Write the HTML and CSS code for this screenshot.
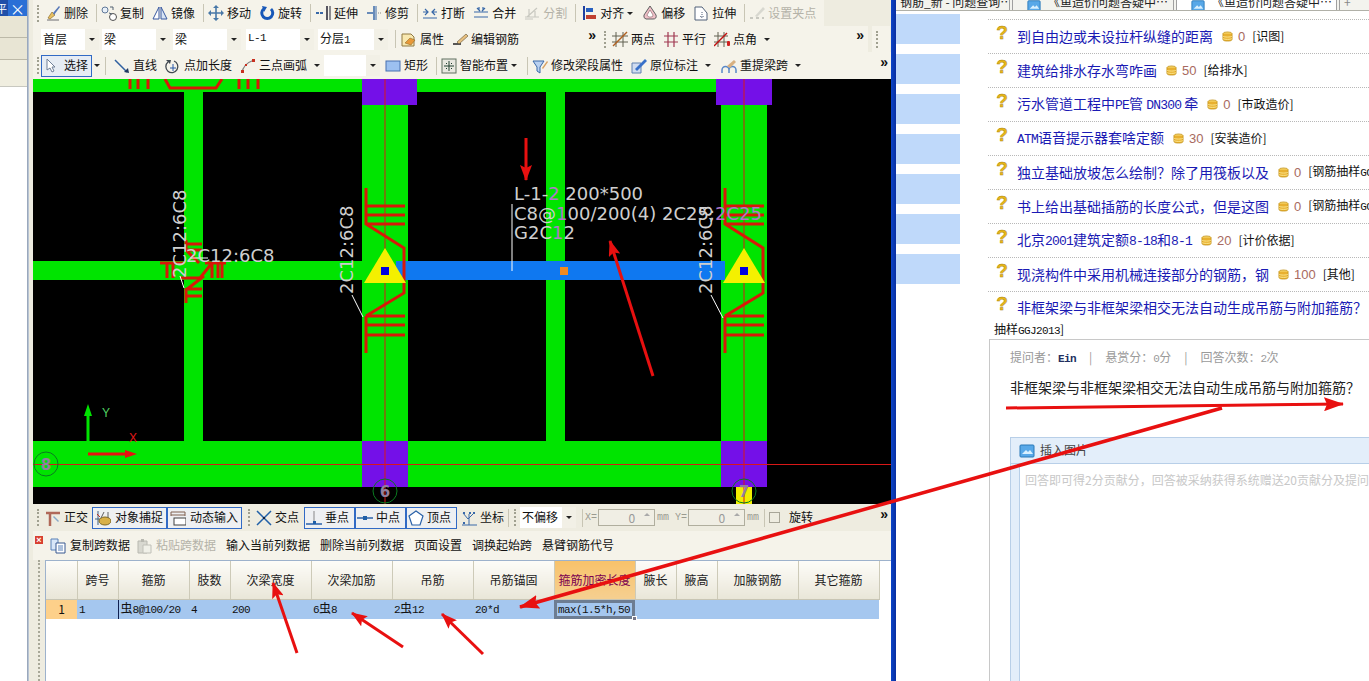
FILE: index.html
```html
<!DOCTYPE html>
<html lang="zh-CN">
<head>
<meta charset="utf-8">
<title>钢筋抽样</title>
<link rel="stylesheet" href="styles.css">
</head>
<body>
<svg class="defs" width="0" height="0">
  <defs>
    <symbol id="i-del" viewBox="0 0 16 16"><path d="M2 15h12" stroke="#999" stroke-width="1.5"/><path d="M3 13l4-6 3 3-5 4z" fill="#e8c060" stroke="#806020" stroke-width=".6"/><path d="M8 8l6-7 1 1-6 8z" fill="#5878b8"/></symbol>
    <symbol id="i-copy" viewBox="0 0 16 16"><circle cx="4" cy="5" r="3" fill="#e8f0f8" stroke="#607898"/><circle cx="12" cy="12" r="3.5" fill="#fff" stroke="#505050"/><path d="M9 2l3 0M12 2v3M8 8l3 1" stroke="#506070" fill="none"/></symbol>
    <symbol id="i-mirror" viewBox="0 0 16 16"><path d="M7 2v12H1z" fill="#fff" stroke="#3858a0"/><path d="M9 2v12h6z" fill="#d8e4f4" stroke="#3858a0"/></symbol>
    <symbol id="i-move" viewBox="0 0 16 16"><path d="M8 1v14M1 8h14" stroke="#4878a8" stroke-width="1.6"/><path d="M8 0l3 3H5zM8 16l3-3H5zM0 8l3-3v6zM16 8l-3-3v6z" fill="#4878a8"/></symbol>
    <symbol id="i-rot" viewBox="0 0 16 16"><path d="M12 4a5.5 5.5 0 1 1-7.500 0" fill="none" stroke="#1858b8" stroke-width="3"/><path d="M3 1l5 1-3 5z" fill="#1858b8"/></symbol>
    <symbol id="i-ext" viewBox="0 0 16 16"><path d="M1 8h8" stroke="#3868a8" stroke-width="2" stroke-dasharray="3 1"/><path d="M12 1v14" stroke="#223" stroke-width="1.500"/><path d="M15 1v14" stroke="#223"/></symbol>
    <symbol id="i-trim" viewBox="0 0 16 16"><path d="M8 1v14" stroke="#3868a8" stroke-width="1.500"/><path d="M10 1v14" stroke="#3868a8"/><path d="M1 8h6" stroke="#3868a8" stroke-width="1.500"/><path d="M12 8h4" stroke="#888" stroke-dasharray="1 1"/></symbol>
    <symbol id="i-break" viewBox="0 0 16 16"><path d="M1 7h5M10 7h5M1 13h14M3 4l3 3-3 3M13 4l-3 3 3 3" stroke="#3868a8" fill="none" stroke-width="1.200"/></symbol>
    <symbol id="i-merge" viewBox="0 0 16 16"><path d="M1 7h14M1 12h14M4 3l3 3M12 3l-3 3M6 2v3M10 2v3" stroke="#3868a8" fill="none" stroke-width="1.200"/></symbol>
    <symbol id="i-split" viewBox="0 0 16 16"><path d="M1 12h14M1 14h8M3 12l10-9M5 4v8M11 6v6" stroke="#c8c8c0" fill="none" stroke-width="1.200"/></symbol>
    <symbol id="i-align" viewBox="0 0 16 16"><path d="M2 1v14" stroke="#2040a0" stroke-width="2"/><rect x="4" y="3" width="7" height="4" fill="#2860c0"/><rect x="4" y="10" width="10" height="4" fill="#c04030"/></symbol>
    <symbol id="i-offset" viewBox="0 0 16 16"><path d="M8 1l6 9q1 4-3 4H4q-3-1-2-4z" fill="#f0c0c8" stroke="#606060"/><path d="M8 5l3 5q0 2-2 2H7q-2-1-2-2z" fill="#fff" stroke="#806060" stroke-width=".6"/></symbol>
    <symbol id="i-stretch" viewBox="0 0 16 16"><path d="M2 2h7l5 6v7H2z" fill="#fff" stroke="#506078"/><path d="M9 7v6M7 11l2 2 2-2" stroke="#506078" fill="none" stroke-dasharray="1 1"/></symbol>
    <symbol id="i-grip" viewBox="0 0 16 16"><path d="M1 13h3M7 13h3M13 13h2" stroke="#c8c8c0" stroke-width="2"/><path d="M6 11l8-9 2 2-8 8z" fill="#d8d8d0"/></symbol>
    <symbol id="i-prop" viewBox="0 0 16 16"><path d="M1 3h9l3 3v9H1z" fill="#f8e8b0" stroke="#907840"/><path d="M4 12l5-5 5 2-4 5z" fill="#e89838" stroke="#806020" stroke-width=".5"/></symbol>
    <symbol id="i-edit" viewBox="0 0 16 16"><path d="M1 13h8" stroke="#222" stroke-width="1.500"/><path d="M5 11l9-8 2 2-9 8z" fill="#e8c080" stroke="#605030" stroke-width=".6"/></symbol>
    <symbol id="i-two" viewBox="0 0 16 16"><path d="M4 1v15M11 1v15M0 5h16M0 11h16" stroke="#606050" stroke-width="1"/><path d="M1 15L15 1" stroke="#b06020" stroke-width="1.500"/></symbol>
    <symbol id="i-par" viewBox="0 0 16 16"><path d="M5 1v15M11 1v15M1 5h14M1 11h14" stroke="#a03850" stroke-width="1.200"/></symbol>
    <symbol id="i-ang" viewBox="0 0 16 16"><path d="M4 1v15M10 1v15M0 5h14M0 11h14" stroke="#606050"/><path d="M0 15L13 2" stroke="#c01010" stroke-width="1.500"/><rect x="13" y="10" width="3" height="5" rx="1" fill="#d02020"/></symbol>
    <symbol id="i-cur" viewBox="0 0 16 16"><path d="M3 1v11l3-2 2 4 2-1-2-4h3z" fill="#fff" stroke="#708098"/></symbol>
    <symbol id="i-line" viewBox="0 0 16 16"><path d="M1 2l12 12" stroke="#3060a0" stroke-width="1.500"/><path d="M15 15l-5-1 4-4z" fill="#203860"/></symbol>
    <symbol id="i-pt" viewBox="0 0 16 16"><path d="M3 4a6 6 0 1 0 6-1" fill="none" stroke="#404850" stroke-width="1.300"/><path d="M8 6v7M5 10h6" stroke="#2858a8"/><path d="M1 2l5 0-1 4z" fill="#404850"/></symbol>
    <symbol id="i-arc" viewBox="0 0 16 16"><path d="M2 15Q3 6 14 2" fill="none" stroke="#808080" stroke-width="1.300"/><rect x="1" y="12" width="3" height="3" fill="#c83020"/><rect x="12" y="1" width="3" height="3" fill="#c83020"/><rect x="5" y="6" width="2" height="2" fill="#c83020"/></symbol>
    <symbol id="i-rect" viewBox="0 0 16 16"><rect x="1" y="3" width="14" height="10" fill="#9cc0f0" stroke="#4870b0"/></symbol>
    <symbol id="i-smart" viewBox="0 0 16 16"><rect x="1" y="1" width="14" height="14" fill="#e8e8e0" stroke="#607060"/><path d="M8 3v10M3 8h10M5 5l1 1M11 5l-1 1M5 11l1-1M11 11l-1-1" stroke="#204030"/></symbol>
    <symbol id="i-fun" viewBox="0 0 16 16"><path d="M1 3h11l-4 6v6l-3-2V9z" fill="#b8d0f0" stroke="#3868a8"/><path d="M10 10l5-7 1 1-5 7z" fill="#d8a060"/></symbol>
    <symbol id="i-mark" viewBox="0 0 16 16"><path d="M1 5h9v10H1z" fill="#d0dcf0" stroke="#6080b0"/><path d="M4 11L14 1l2 2L6 13z" fill="#3870c8"/></symbol>
    <symbol id="i-span" viewBox="0 0 16 16"><path d="M1 15v-3a3 3 0 0 1 7 0v3M8 15v-3a3 3 0 0 1 7 0v3" fill="none" stroke="#5888c8" stroke-width="1.500"/><path d="M6 8l7-6 2 2-6 6z" fill="#d8b080"/></symbol>
    <symbol id="i-orth" viewBox="0 0 16 16"><path d="M1 3h14M5 3v13" stroke="#b06858" stroke-width="2.500"/><path d="M9 6l5 5-1 1-5-5z" fill="#88a8c8"/></symbol>
    <symbol id="i-snap" viewBox="0 0 16 16"><path d="M3 1v14M0 9h7" stroke="#406080"/><path d="M2 4l3 3" stroke="#c03020"/><ellipse cx="10" cy="11" rx="6" ry="4" fill="#d8b048" stroke="#806820"/><path d="M6 8l3-6M13 8l0-6" stroke="#606060"/></symbol>
    <symbol id="i-dyn" viewBox="0 0 16 16"><path d="M1 2h14M1 5h14M1 2v4M15 2v4" stroke="#806050"/><rect x="4" y="8" width="12" height="7" fill="#fff" stroke="#404040"/></symbol>
    <symbol id="i-cross" viewBox="0 0 16 16"><path d="M1 1l14 14M15 1L1 15" stroke="#2060a8" stroke-width="1.500"/><rect x="7" y="7" width="2" height="2" fill="#102040"/></symbol>
    <symbol id="i-perp" viewBox="0 0 16 16"><path d="M0 14h16" stroke="#2860a8" stroke-width="1.500"/><path d="M8 1v11" stroke="#888"/><rect x="7" y="11" width="3" height="3" fill="#2060a8"/></symbol>
    <symbol id="i-mid" viewBox="0 0 16 16"><path d="M0 8h16" stroke="#2860a8" stroke-width="1.500"/><rect x="6" y="6" width="4" height="4" fill="#2060a8"/></symbol>
    <symbol id="i-ver" viewBox="0 0 16 16"><path d="M8 1l7 5-3 9H4L1 6z" fill="#fff" stroke="#2860a8" stroke-width="1.200"/></symbol>
    <symbol id="i-coord" viewBox="0 0 16 16"><path d="M1 15h15M8 15V4M2 3l5 6 6-6" stroke="#3868a8" fill="none"/><path d="M2 2h2v2H2zM12 2h2v2h-2zM2 12h2v2H2zM8 2h2v2H8z" fill="#3868a8"/></symbol>
    <symbol id="i-cp" viewBox="0 0 16 16"><path d="M1 1h7v11H1z" fill="#d8e6f8" stroke="#5880b8"/><path d="M6 5h9v10H6z" fill="#fff" stroke="#385890"/><path d="M8 8h5M8 10h5M8 12h5" stroke="#5880b8"/></symbol>
    <symbol id="i-paste" viewBox="0 0 16 16"><path d="M2 3h9v12H2z" fill="#d8d8d0" stroke="#b8b8b0"/><path d="M5 1h3v3H5z" fill="#b8b8b0"/><path d="M7 7h8v8H7z" fill="#f0f0e8" stroke="#c0c0b8"/></symbol>
    <symbol id="i-pic" viewBox="0 0 16 16"><rect x="1" y="2" width="14" height="12" rx="1" fill="#58a8e8" stroke="#2878b8"/><path d="M3 11l4-4 2 2 2-2 3 4z" fill="#d8f0ff"/></symbol>
    <symbol id="i-coin" viewBox="0 0 12 12"><ellipse cx="6" cy="3" rx="5" ry="2" fill="#f4d060" stroke="#c09018" stroke-width=".8"/><path d="M1 3v6c0 1.500 2 2 5 2s5-.5 5-2V3" fill="#e8b030" stroke="#c09018" stroke-width=".8"/><path d="M1 5.500c1 1.500 9 1.500 10 0M1 8c1 1.500 9 1.500 10 0" fill="none" stroke="#fff0a0" stroke-width=".9"/></symbol>
    <marker id="head" viewBox="0 0 16 12" refX="15" refY="6" markerWidth="16" markerHeight="12" markerUnits="userSpaceOnUse" orient="auto"><path d="M0 0L16 6 0 12 3 6z" fill="#e81010"/></marker>
    <marker id="head-big" viewBox="0 0 20 14" refX="19" refY="7" markerWidth="20" markerHeight="14" markerUnits="userSpaceOnUse" orient="auto"><path d="M0 0L20 7 0 14 3 7z" fill="#e81010"/></marker>
  </defs>
</svg>

<aside class="dock">
  <div class="dock-title"><span class="dock-pin">平</span><span class="dock-x">×</span></div>
  <div class="dock-tab"></div>
  <div class="dock-tab"></div>
  <div class="dock-tab dock-tab-light"></div>
  <div class="dock-body"></div>
</aside>

<main class="app">
  <div class="tb tb1">
    <div class="seg seg-824">
      <span class="grip"></span>
      <span class="tool"><svg class="ic"><use href="#i-del"/></svg>删除</span><span class="sep"></span>
      <span class="tool"><svg class="ic"><use href="#i-copy"/></svg>复制</span>
      <span class="tool"><svg class="ic"><use href="#i-mirror"/></svg>镜像</span><span class="sep"></span>
      <span class="tool"><svg class="ic"><use href="#i-move"/></svg>移动</span>
      <span class="tool"><svg class="ic"><use href="#i-rot"/></svg>旋转</span><span class="sep"></span>
      <span class="tool"><svg class="ic"><use href="#i-ext"/></svg>延伸</span>
      <span class="tool"><svg class="ic"><use href="#i-trim"/></svg>修剪</span><span class="sep"></span>
      <span class="tool"><svg class="ic"><use href="#i-break"/></svg>打断</span>
      <span class="tool"><svg class="ic"><use href="#i-merge"/></svg>合并</span>
      <span class="tool off"><svg class="ic"><use href="#i-split"/></svg>分割</span><span class="sep"></span>
      <span class="tool tool-align"><svg class="ic"><use href="#i-align"/></svg>对齐<i class="caret caret-near"></i></span>
      <span class="tool"><svg class="ic"><use href="#i-offset"/></svg>偏移</span>
      <span class="tool"><svg class="ic"><use href="#i-stretch"/></svg>拉伸</span><span class="sep"></span>
      <span class="tool off"><svg class="ic"><use href="#i-grip"/></svg>设置夹点</span>
    </div>
  </div>

  <div class="tb tb2">
    <div class="seg seg-600">
      <span class="combo w58">首层<i class="caret"></i></span>
      <span class="combo w68">梁<i class="caret"></i></span>
      <span class="combo w68">梁<i class="caret"></i></span>
      <span class="combo w68 gap5"><b class="m12">L-1</b><i class="caret"></i></span>
      <span class="combo w70"><span>分层<b class="m12">1</b></span><i class="caret"></i></span>
      <span class="sep sep-tight"></span>
      <span class="tool"><svg class="ic"><use href="#i-prop"/></svg>属性</span>
      <span class="tool"><svg class="ic"><use href="#i-edit"/></svg>编辑钢筋</span>
      <span class="more">»</span>
    </div>
    <div class="seg seg-268">
      <span class="grip"></span>
      <span class="tool"><svg class="ic"><use href="#i-two"/></svg>两点</span>
      <span class="tool"><svg class="ic"><use href="#i-par"/></svg>平行</span>
      <span class="tool tool-caret"><svg class="ic"><use href="#i-ang"/></svg>点角<i class="caret"></i></span>
      <span class="more">»</span>
    </div>
    <div class="seg seg-end"><span class="grip"></span></div>
  </div>

  <div class="tb tb3">
    <div class="seg seg-fill">
      <span class="grip"></span>
      <span class="tool tool-on sel-tool"><svg class="ic"><use href="#i-cur"/></svg>选择</span><i class="caret caret-sel"></i><span class="sep sep-sel"></span>
      <span class="tool"><svg class="ic"><use href="#i-line"/></svg>直线</span>
      <span class="tool"><svg class="ic"><use href="#i-pt"/></svg>点加长度</span>
      <span class="tool tool-caret"><svg class="ic"><use href="#i-arc"/></svg>三点画弧<i class="caret"></i></span>
      <span class="combo w56 combo-empty"><i class="caret"></i></span>
      <span class="tool"><svg class="ic"><use href="#i-rect"/></svg>矩形</span><span class="sep"></span>
      <span class="tool tool-caret"><svg class="ic"><use href="#i-smart"/></svg>智能布置<i class="caret caret-near"></i></span><span class="sep"></span>
      <span class="tool"><svg class="ic"><use href="#i-fun"/></svg>修改梁段属性</span>
      <span class="tool tool-caret"><svg class="ic"><use href="#i-mark"/></svg>原位标注<i class="caret"></i></span>
      <span class="tool tool-caret"><svg class="ic"><use href="#i-span"/></svg>重提梁跨<i class="caret"></i></span>
      <span class="more more-up">»</span>
    </div>
  </div>

  <svg class="canvas" viewBox="33 79 858 425" width="858" height="425">
    <rect class="c-bg" x="33" y="79" width="858" height="425"/>
    <g class="c-green">
      <rect x="33" y="79" width="683" height="13"/>
      <rect x="184" y="92" width="19" height="349"/>
      <rect x="546" y="92" width="19" height="349"/>
      <rect x="362" y="105" width="46" height="336"/>
      <rect x="721" y="105" width="46" height="336"/>
      <rect x="33" y="261" width="329" height="19"/>
      <rect x="33" y="441" width="688" height="46"/>
    </g>
    <rect class="c-beam" x="396" y="261" width="329" height="19"/>
    <g class="c-purple">
      <rect x="362" y="79" width="55" height="26"/>
      <rect x="716" y="79" width="56" height="26"/>
      <rect x="362" y="441" width="46" height="46"/>
      <rect x="721" y="441" width="46" height="46"/>
    </g>
    <rect class="c-yellow" x="736" y="487" width="16" height="17"/>
    <g class="c-axis">
      <path d="M33 464.500H891M385 79V504M744 79V504"/>
    </g>
    <g class="c-ring">
      <circle cx="46" cy="464" r="12"/>
      <circle cx="385" cy="491" r="12"/>
      <circle cx="744" cy="491" r="12"/>
    </g>
    <g class="c-num">
      <text x="46" y="470">8</text>
      <text x="385" y="497">6</text>
      <text x="744" y="497">7</text>
    </g>
    <g class="c-red">
      <path d="M130 79v10M138 79v10M148 79v10M239 79v10M248 79v10M258 79v10"/>
      <path d="M165 79l5 9h46l6-9"/>
      <path d="M366 188v37M366 206h39M366 215h39M366 224h39M366 224l38 24v45l-38 23M366 316h39M366 325h39M366 335h39M366 316v37"/>
      <path d="M366 188v37M366 206h39M366 215h39M366 224h39M366 224l38 24v45l-38 23M366 316h39M366 325h39M366 335h39M366 316v37" transform="translate(359 0)"/>
      <path d="M186 240v10M186 244h16M186 250h16M186 250l13 13M186 288v15M186 289h16M186 296h16M160 263h24M167 263v15M173 263v15M180 278h20l12-15M186 290l18-14M205 263h21M212 263v15M218 263v15M222 263v15"/>
    </g>
    <g class="c-tri">
      <path d="M385 248l21 35H364z"/>
      <path d="M744 248l21 35H723z"/>
    </g>
    <g class="c-dot">
      <rect x="381" y="267" width="8" height="8"/>
      <rect x="740" y="267" width="8" height="8"/>
    </g>
    <rect class="c-orange" x="560" y="267" width="8" height="8"/>
    <g class="c-lead">
      <path d="M512 204v67M352 295l11 22M711 295l12 23M180 276l4 12M190 258h18"/>
    </g>
    <g class="c-text">
      <text x="514" y="200">L-1-<tspan class="c-pur">2</tspan> 200*500</text>
      <text x="514" y="220">C8@<tspan class="c-pur">1</tspan>00/200(4) 2C25;<tspan class="c-pur">2C25</tspan></text>
      <text x="514" y="239">G2C<tspan class="c-pur">1</tspan>2</text>
      <text x="186" y="262">2C12:6C8</text>
      <text transform="rotate(-90 186 278)" x="186" y="278">2C12:6C8</text>
      <text transform="rotate(-90 353 294)" x="353" y="294">2C12:6C8</text>
      <text transform="rotate(-90 712 294)" x="712" y="294">2C12:6C8</text>
    </g>
    <g class="c-ucs">
      <path class="ucs-y" d="M88 445V410"/>
      <path class="ucs-yh" d="M88 404l4 12h-8z"/>
      <path class="ucs-x" d="M88 454h42"/>
      <path class="ucs-xh" d="M137 454l-12 4v-8z"/>
      <text class="ucs-yt" x="102" y="417">Y</text>
      <text class="ucs-xt" x="129" y="442">X</text>
    </g>
  </svg>

  <div class="tb tb-snap">
    <span class="grip"></span>
    <span class="tool"><svg class="ic"><use href="#i-orth"/></svg>正交</span>
    <span class="snapbtn"><svg class="ic"><use href="#i-snap"/></svg>对象捕捉</span>
    <span class="snapbtn"><svg class="ic"><use href="#i-dyn"/></svg>动态输入</span>
    <span class="grip grip-b"></span>
    <span class="tool tool-tight"><svg class="ic"><use href="#i-cross"/></svg>交点</span>
    <span class="snapbtn snapbtn-s"><svg class="ic"><use href="#i-perp"/></svg>垂点</span>
    <span class="snapbtn snapbtn-s"><svg class="ic"><use href="#i-mid"/></svg>中点</span>
    <span class="snapbtn snapbtn-s"><svg class="ic"><use href="#i-ver"/></svg>顶点</span>
    <span class="tool tool-coord"><svg class="ic"><use href="#i-coord"/></svg>坐标</span>
    <span class="sep sep-tight"></span>
    <span class="grip grip-c"></span>
    <span class="combo w56 combo-f">不偏移<i class="caret"></i></span>
    <span class="sep sep-tight2"></span>
    <span class="xy">X=</span><span class="spin">0<i class="spin-btn"></i></span><span class="xy xy-mm">mm</span>
    <span class="xy xy-y">Y=</span><span class="spin">0<i class="spin-btn"></i></span><span class="xy xy-mm">mm</span>
    <span class="sep sep-tight2"></span>
    <span class="check"></span>
    <span class="rot-label">旋转</span>
    <span class="more more-snap">»</span>
  </div>

  <section class="panel">
    <span class="panel-close">×</span>
    <div class="panel-tools">
      <span class="tool tool-p"><svg class="ic"><use href="#i-cp"/></svg>复制跨数据</span>
      <span class="tool tool-p tool-p2 off"><svg class="ic"><use href="#i-paste"/></svg>粘贴跨数据</span>
      <span class="ptext">输入当前列数据</span>
      <span class="ptext">删除当前列数据</span>
      <span class="ptext">页面设置</span>
      <span class="ptext">调换起始跨</span>
      <span class="ptext">悬臂钢筋代号</span>
    </div>
    <div class="panel-body">
      <span class="v-grip"></span>
      <div class="grid-wrap">
        <table class="grid">
          <colgroup>
            <col class="c31"><col class="c41"><col class="c71"><col class="c41"><col class="c81"><col class="c81"><col class="c81"><col class="c81"><col class="c81"><col class="c41"><col class="c41"><col class="c81"><col class="c81">
          </colgroup>
          <thead>
            <tr>
              <th></th><th>跨号</th><th>箍筋</th><th>肢数</th><th>次梁宽度</th><th>次梁加筋</th><th>吊筋</th><th>吊筋锚固</th><th class="th-on">箍筋加密长度</th><th>腋长</th><th>腋高</th><th>加腋钢筋</th><th>其它箍筋</th>
            </tr>
          </thead>
          <tbody>
            <tr>
              <td class="td-num">1</td>
              <td><b class="m12">1</b></td>
              <td class="td-mark">虫<b class="m12">8@100/20</b></td>
              <td><b class="m12">4</b></td>
              <td><b class="m12">200</b></td>
              <td><b class="m12">6</b>虫<b class="m12">8</b></td>
              <td><b class="m12">2</b>虫<b class="m12">12</b></td>
              <td><b class="m12">20*d</b></td>
              <td class="td-sel"><b class="m12">max(1.5*h,50</b><i class="handle"></i></td>
              <td></td><td></td><td></td><td></td>
            </tr>
          </tbody>
        </table>
      </div>
    </div>
  </section>
</main>

<div class="divider"></div>

<section class="browser">
  <nav class="tabs">
    <span class="tab tab1">钢筋_新 - 问题查询…</span>
    <span class="tab tab2"><svg class="tab-ic"><use href="#i-pic"/></svg>《鱼造价问题答疑中…</span>
    <span class="tab tab3"><svg class="tab-ic"><use href="#i-pic"/></svg>《鱼造价问题答疑中…</span>
    <span class="tab tab4">+</span>
  </nav>
  <div class="page">
    <div class="bars">
      <span class="bar"></span><span class="bar"></span><span class="bar"></span><span class="bar"></span><span class="bar"></span><span class="bar"></span><span class="bar"></span>
    </div>
    <div class="content">
      <ul class="qlist">
        <li class="q"><span class="qm">?</span><a class="qt">到自由边或未设拉杆纵缝的距离</a><svg class="coin"><use href="#i-coin"/></svg><span class="pts">0</span><span class="tag">[识图]</span></li>
        <li class="q"><span class="qm">?</span><a class="qt">建筑给排水存水弯咋画</a><svg class="coin"><use href="#i-coin"/></svg><span class="pts">50</span><span class="tag">[给排水]</span></li>
        <li class="q"><span class="qm">?</span><a class="qt">污水管道工程中<b class="m14">PE</b>管 <b class="m14">DN300</b> 牵</a><svg class="coin"><use href="#i-coin"/></svg><span class="pts">0</span><span class="tag">[市政造价]</span></li>
        <li class="q"><span class="qm">?</span><a class="qt"><b class="m14">ATM</b>语音提示器套啥定额</a><svg class="coin"><use href="#i-coin"/></svg><span class="pts">30</span><span class="tag">[安装造价]</span></li>
        <li class="q"><span class="qm">?</span><a class="qt">独立基础放坡怎么绘制？除了用筏板以及</a><svg class="coin"><use href="#i-coin"/></svg><span class="pts">0</span><span class="tag">[钢筋抽样<b class="m12">GGJ2013</b>]</span></li>
        <li class="q"><span class="qm">?</span><a class="qt">书上给出基础插筋的长度公式，但是这图</a><svg class="coin"><use href="#i-coin"/></svg><span class="pts">0</span><span class="tag">[钢筋抽样<b class="m12">GGJ2013</b>]</span></li>
        <li class="q"><span class="qm">?</span><a class="qt">北京<b class="m14">2001</b>建筑定额<b class="m14">8-18</b>和<b class="m14">8-1</b></a><svg class="coin"><use href="#i-coin"/></svg><span class="pts">20</span><span class="tag">[计价依据]</span></li>
        <li class="q"><span class="qm">?</span><a class="qt">现浇构件中采用机械连接部分的钢筋，钢</a><svg class="coin"><use href="#i-coin"/></svg><span class="pts">100</span><span class="tag">[其他]</span></li>
        <li class="q q-last"><span class="qm">?</span><a class="qt">非框架梁与非框架梁相交无法自动生成吊筋与附加箍筋？</a></li>
        <li class="q-wrap">抽样<b class="m12">GGJ2013</b>]</li>
      </ul>
      <div class="answer">
        <p class="meta">提问者：<b class="m12 asker">Ein</b><span class="pipe">|</span>悬赏分：<b class="m12 meta-n">0</b>分<span class="pipe">|</span>回答次数：<b class="m12 meta-n">2</b>次</p>
        <h2 class="a-title">非框架梁与非框架梁相交无法自动生成吊筋与附加箍筋？</h2>
        <div class="editor">
          <div class="ed-head"><svg class="ic ic-pic"><use href="#i-pic"/></svg>插入图片</div>
          <div class="ed-body">
            <p class="ed-hold">回答即可得2分贡献分，回答被采纳获得系统赠送20贡献分及提问者悬赏分</p>
          </div>
        </div>
      </div>
    </div>
  </div>
</section>

<svg class="arrows" viewBox="0 0 1369 681" width="1369" height="681">
  <g class="a-line">
    <line x1="526" y1="138" x2="526" y2="180" marker-end="url(#head)"/>
    <line x1="653" y1="376" x2="610" y2="241" marker-end="url(#head)"/>
    <line x1="1006" y1="408" x2="1343" y2="404" marker-end="url(#head-big)"/>
    <line class="a-long" x1="1222" y1="408" x2="520" y2="607" marker-end="url(#head-big)"/>
    <line x1="297" y1="653" x2="273" y2="583" marker-end="url(#head)"/>
    <line x1="403" y1="647" x2="352" y2="613" marker-end="url(#head)"/>
    <line x1="483" y1="654" x2="442" y2="614" marker-end="url(#head)"/>
  </g>
</svg>
</body>
</html>
```

FILE: styles.css
```css
* { box-sizing: border-box; }
html, body { margin: 0; padding: 0; }
body {
  position: relative;
  display: flex;
  width: 1369px;
  height: 681px;
  overflow: hidden;
  background: #fff;
  font: 12px/1.2 "Noto Sans CJK SC", "Liberation Sans", sans-serif;
  color: #111;
}
.defs { position: absolute; }
.m12, .m14 { font-family: "Liberation Mono", monospace; font-weight: 400; }
.m12 { font-size: 11px; letter-spacing: -.6px; }
.m14 { font-size: 13px; letter-spacing: -.8px; }

/* left dock */
.dock { width: 27px; flex: none; display: flex; flex-direction: column; }
.dock-title { height: 16px; background: #2a6fd6; color: #fff; display: flex; align-items: center; font-size: 11px; overflow: hidden; }
.dock-pin { width: 8px; background: #1f4fa8; text-indent: -4px; overflow: hidden; line-height: 16px; }
.dock-x { flex: 1; text-align: center; font-size: 15px; line-height: 15px; }
.dock-tab { height: 22px; background: #e8e5d4; border-bottom: 1px solid #bcb9a8; }
.dock-tab-light { height: 26px; background: #f0eee0; border-bottom: 0; }
.dock-body { flex: 1; background: #fff; border-top: 1px solid #c8c8c0; }

/* application */
.app { width: 864px; flex: none; background: #eeece0; border-left: 1px solid #9aa8bc; box-shadow: inset 1px 0 0 #b8c4d4; padding-left: 5px; display: flex; flex-direction: column; }
.tb { display: flex; align-items: center; flex: none; }
.tb1 { height: 26px; }
.tb2 { height: 26px; }
.tb3 { height: 27px; }
.seg { display: flex; align-items: center; height: 100%; background: #f5f3ea; }
.seg-824 { width: 791px; }
.seg-600 { width: 567px; }
.seg-268 { width: 268px; position: relative; }
.seg-end { width: 18px; margin-left: 4px; }
.seg-fill { width: 858px; }
.grip { width: 3px; height: 17px; margin: 0 5px 0 4px; flex: none; border-left: 2px dotted #a0a090; }
.tool { display: inline-flex; align-items: center; margin-right: 8px; white-space: nowrap; flex: none; }
.tool .ic { margin-right: 3px; }
.ic { width: 16px; height: 16px; flex: none; display: block; }
.off { color: #b4b2a8; }
.sep { width: 1px; height: 18px; background: #c8c5b4; margin-right: 4px; flex: none; }
.sep-tight { margin: 0 5px 0 4px; }
.sep-tight2 { margin: 0 2px 0 5px; }
.caret { display: inline-block; width: 0; height: 0; border: 3px solid transparent; border-top: 3px solid #222; border-bottom: 0; margin-left: 7px; }
.caret-near { margin-left: 3px; }
.tool-caret { margin-right: 7px; }
.tool-caret .caret { margin-right: 3px; }
.tool-align { margin-left: 2px; margin-right: 9px; }
.tool-align .ic { margin-right: 2px; }
.tool-align .caret { margin-right: 0; }
.tool-align { gap: 0; }
.combo { display: inline-flex; align-items: center; justify-content: space-between; height: 21px; background: #fff; padding: 0 0 0 2px; margin-right: 3px; flex: none; box-shadow: inset -14px 0 0 #f2f0e6; }
.combo .caret { margin: 0 4px 0 0; }
.combo-empty { justify-content: flex-end; margin-left: -6px; margin-right: 5px; }
.w58 { width: 58px; margin-left: 8px; }
.w68 { width: 68px; margin-left: 0; }
.w70 { width: 70px; }
.w56 { width: 56px; }
.gap5 { margin-left: 2px; margin-right: 4px; }
.more { margin-left: auto; margin-right: 4px; font: 700 14px/10px "Liberation Sans", sans-serif; transform: translateY(-4px); }
.more-up { margin-right: 3px; }
.tool-on { border: 1px solid #316ac5; background: #e6ecf4; }
.sel-tool { height: 22px; width: 51px; padding-left: 2px; margin-right: 2px; margin-left: -4px; gap: 1px; }
.caret-sel { margin-left: 0; }
.sep-sel { margin: 0 8px 0 5px; }

/* canvas */
.canvas { display: block; flex: none; }
.c-bg { fill: #000; }
.c-green { fill: #00e400; }
.c-beam { fill: #0f78f0; }
.c-purple { fill: #7410e8; }
.c-yellow { fill: #f0ef00; }
.c-axis { stroke: #d81818; stroke-width: 1; fill: none; }
.c-ring { fill: none; stroke: #0a7a20; stroke-width: 1; }
.c-num { fill: #9080a0; font: 700 15px "DejaVu Sans", sans-serif; text-anchor: middle; }
.c-red { fill: none; stroke: #d81808; stroke-width: 3; }
.c-tri { fill: #f4f000; }
.c-dot { fill: #0000e0; }
.c-orange { fill: #f08a20; }
.c-lead { fill: none; stroke: #fff; stroke-width: 1; }
.c-text { fill: #cfcfcf; font: 18px "DejaVu Sans", sans-serif; }
.c-pur { fill: #b078c8; }
.ucs-y { stroke: #00e400; stroke-width: 3; }
.ucs-yh { fill: #00e400; }
.ucs-x { stroke: #e81010; stroke-width: 3; }
.ucs-xh { fill: #e81010; }
.ucs-yt { fill: #50d060; font: 12px "Liberation Sans", sans-serif; }
.ucs-xt { fill: #e01818; font: 12px "Liberation Sans", sans-serif; }

/* snap bar */
.tb-snap { height: 27px; }
.tb-snap .tool { margin-right: 4px; }
.snapbtn { display: inline-flex; align-items: center; height: 22px; width: 75px; border: 1px solid #316ac5; background: #eef0f2; padding-left: 2px; flex: none; margin-right: 0; }
.snapbtn .ic { margin-right: 4px; }
.snapbtn-s { width: 51px; padding-left: 1px; }
.snapbtn-s .ic { margin-right: 3px; }
.grip-b { margin: 0 5px 0 6px; }
.tool-tight { margin-right: 5px; }
.tb-snap .tool.tool-tight { margin-right: 5px; }
.tb-snap .tool.tool-coord { margin-left: 4px; margin-right: 0; }
.grip-c { margin: 0 3px 0 0; }
.combo-f { margin-right: 1px; }
.xy { font: 10px "Liberation Mono", monospace; color: #9a9a90; margin-right: 1px; flex: none; }
.xy-mm { margin: 0 0 0 2px; }
.xy-y { margin-left: 6px; }
.spin { position: relative; width: 57px; height: 17px; border: 1px solid #b0ae9e; background: #f0eee4; color: #999; text-align: right; padding-right: 19px; line-height: 15px; flex: none; }
.spin-btn { position: absolute; right: 4px; top: 3px; width: 0; height: 0; border: 3px solid transparent; border-bottom: 3px solid #aaa; border-top: 0; }
.check { width: 11px; height: 11px; border: 1px solid #a8a698; margin-left: 2px; flex: none; }
.rot-label { margin-left: 9px; }
.more-snap { margin-right: 3px; }

/* bottom panel */
.panel { position: relative; flex: 1; display: flex; flex-direction: column; }
.panel-close { position: absolute; left: 2px; top: 5px; width: 8px; height: 8px; background: #d84030; color: #fff; font: 700 9px/8px "Liberation Sans", sans-serif; text-align: center; }
.panel-tools { height: 29px; display: flex; align-items: center; padding-left: 17px; background: #f5f3ea; flex: none; }
.tool-p { margin-right: 6px; }
.tool-p2 { margin-right: 10px; }
.tool-p .ic { margin-right: 4px; }
.ptext { margin-right: 10px; white-space: nowrap; flex: none; }
.panel-body { flex: 1; display: flex; }
.v-grip { width: 3px; margin: 0 4px 0 5px; border-left: 2px dotted #a8a898; flex: none; }
.grid-wrap { width: 846px; background: #fff; border-top: 1px solid #9db2cc; border-left: 1px solid #9db2cc; flex: none; }
.grid { width: 833px; border-collapse: collapse; table-layout: fixed; }
.c31 { width: 31px; }
.c41 { width: 41px; }
.c71 { width: 71px; }
.c81 { width: 81px; }
.grid th { height: 38px; font-weight: 400; text-align: center; padding: 0; background: linear-gradient(#fdfcf8, #e9e6d8); border-right: 1px solid #cdcab8; border-bottom: 1px solid #c8c5b4; color: #222; }
.grid th.th-on { background: linear-gradient(#f8c26a, #f5cf90); color: #7a0050; }
.grid td { height: 20px; padding: 0 0 0 2px; background: #a5c7ef; white-space: nowrap; overflow: hidden; color: #111; }
.grid td.td-num { background: #fdd08a; text-align: center; padding: 0; }
.grid td.td-mark { border-left: 1px solid #102050; }
.grid td.td-sel { position: relative; overflow: visible; box-shadow: inset 0 0 0 3px #6d7d92; padding-left: 4px; }
.handle { position: absolute; right: -2px; bottom: -2px; width: 5px; height: 5px; background: #778; border: 1px solid #fff; }

/* divider */
.divider { width: 5px; flex: none; background: linear-gradient(90deg, #0a44c8, #0a2fa0); }

/* browser */
.browser { flex: 1; min-width: 0; display: flex; flex-direction: column; }
.tabs { height: 11px; flex: none; display: flex; gap: 2px; border-bottom: 1px solid #b0b0a8; overflow: hidden; font-size: 12px; background: #f3f3ee; }
.tab { position: relative; flex: none; display: flex; align-items: flex-end; height: 10px; line-height: 12px; padding: 0 0 2px 4px; color: #222; border-right: 1px solid #a0a0a0; white-space: nowrap; overflow: hidden; }
.tab1 { width: 114px; }
.tab2 { width: 162px; padding-left: 14px; border-left: 1px solid #a0a0a0; }
.tab3 { width: 161px; padding-left: 14px; background: #fff; border-left: 1px solid #a0a0a0; }
.tab4 { flex: 1; border-left: 1px solid #a0a0a0; color: #888; border-right: 0; }
.tab-ic { width: 14px; height: 14px; margin: 0 7px -5px 0; flex: none; }
.page { flex: 1; display: flex; min-height: 0; }
.bars { width: 64px; flex: none; padding-top: 3px; display: flex; flex-direction: column; gap: 10px; }
.bar { height: 30px; background: #bfd9fa; flex: none; }
.content { flex: 1; margin-left: 28px; min-width: 0; padding-top: 8px; overflow: hidden; }
.qlist { list-style: none; margin: 0; padding: 0; }
.q { display: flex; align-items: center; height: 34px; border-top: 1px dotted #b8b8b8; padding-left: 8px; white-space: nowrap; overflow: hidden; }
.q-last { height: 30px; padding-top: 2px; }
.qm { width: 12px; margin-right: 9px; flex: none; transform: translateY(-4px); text-align: center; color: #e8b818; font: 700 19px/20px "Liberation Sans", sans-serif; -webkit-text-stroke: .4px #a88010; }
.qt { font-size: 14px; color: #1a1ab4; flex: none; }
.coin { width: 11px; height: 11px; margin: 0 5px 0 9px; flex: none; }
.pts { color: #a86a60; font: 13px "Liberation Sans", sans-serif; flex: none; }
.tag { margin-left: 7px; flex: none; }
.q-wrap { height: 18px; padding-left: 6px; line-height: 16px; }
.answer { border-top: 1px solid #c8c8c8; border-left: 1px solid #c8c8c8; margin-left: 1px; padding: 9px 0 0 20px; height: 342px; }
.meta { margin: 0; color: #9a9a9a; height: 16px; line-height: 16px; white-space: nowrap; }
.asker { color: #223060; font-weight: 700; }
.meta-n { color: #9a9a9a; }
.pipe { margin: 0 13px; }
.a-title { margin: 13px 0 0; font-size: 14px; font-weight: 400; line-height: 18px; color: #222; white-space: nowrap; }
.editor { margin-top: 41px; border: 1px solid #b8cfe8; border-right: 0; height: 260px; background: #e3eefa; display: flex; flex-direction: column; }
.ed-head { height: 26px; display: flex; align-items: center; padding-left: 8px; color: #444; border-bottom: 1px solid #b8cfe8; flex: none; }
.ic-pic { margin-right: 5px; }
.ed-body { flex: 1; margin-left: 8px; background: #fff; border-left: 1px solid #b8cfe8; padding: 9px 0 0 5px; overflow: hidden; }
.ed-hold { margin: 0; color: #c8c8c8; white-space: nowrap; }

/* annotation arrows over the whole shot */
.arrows { position: absolute; left: 0; top: 0; pointer-events: none; }
.a-line line { stroke: #e81010; stroke-width: 3; }
.a-line .a-long { stroke-width: 3.500; }
```
